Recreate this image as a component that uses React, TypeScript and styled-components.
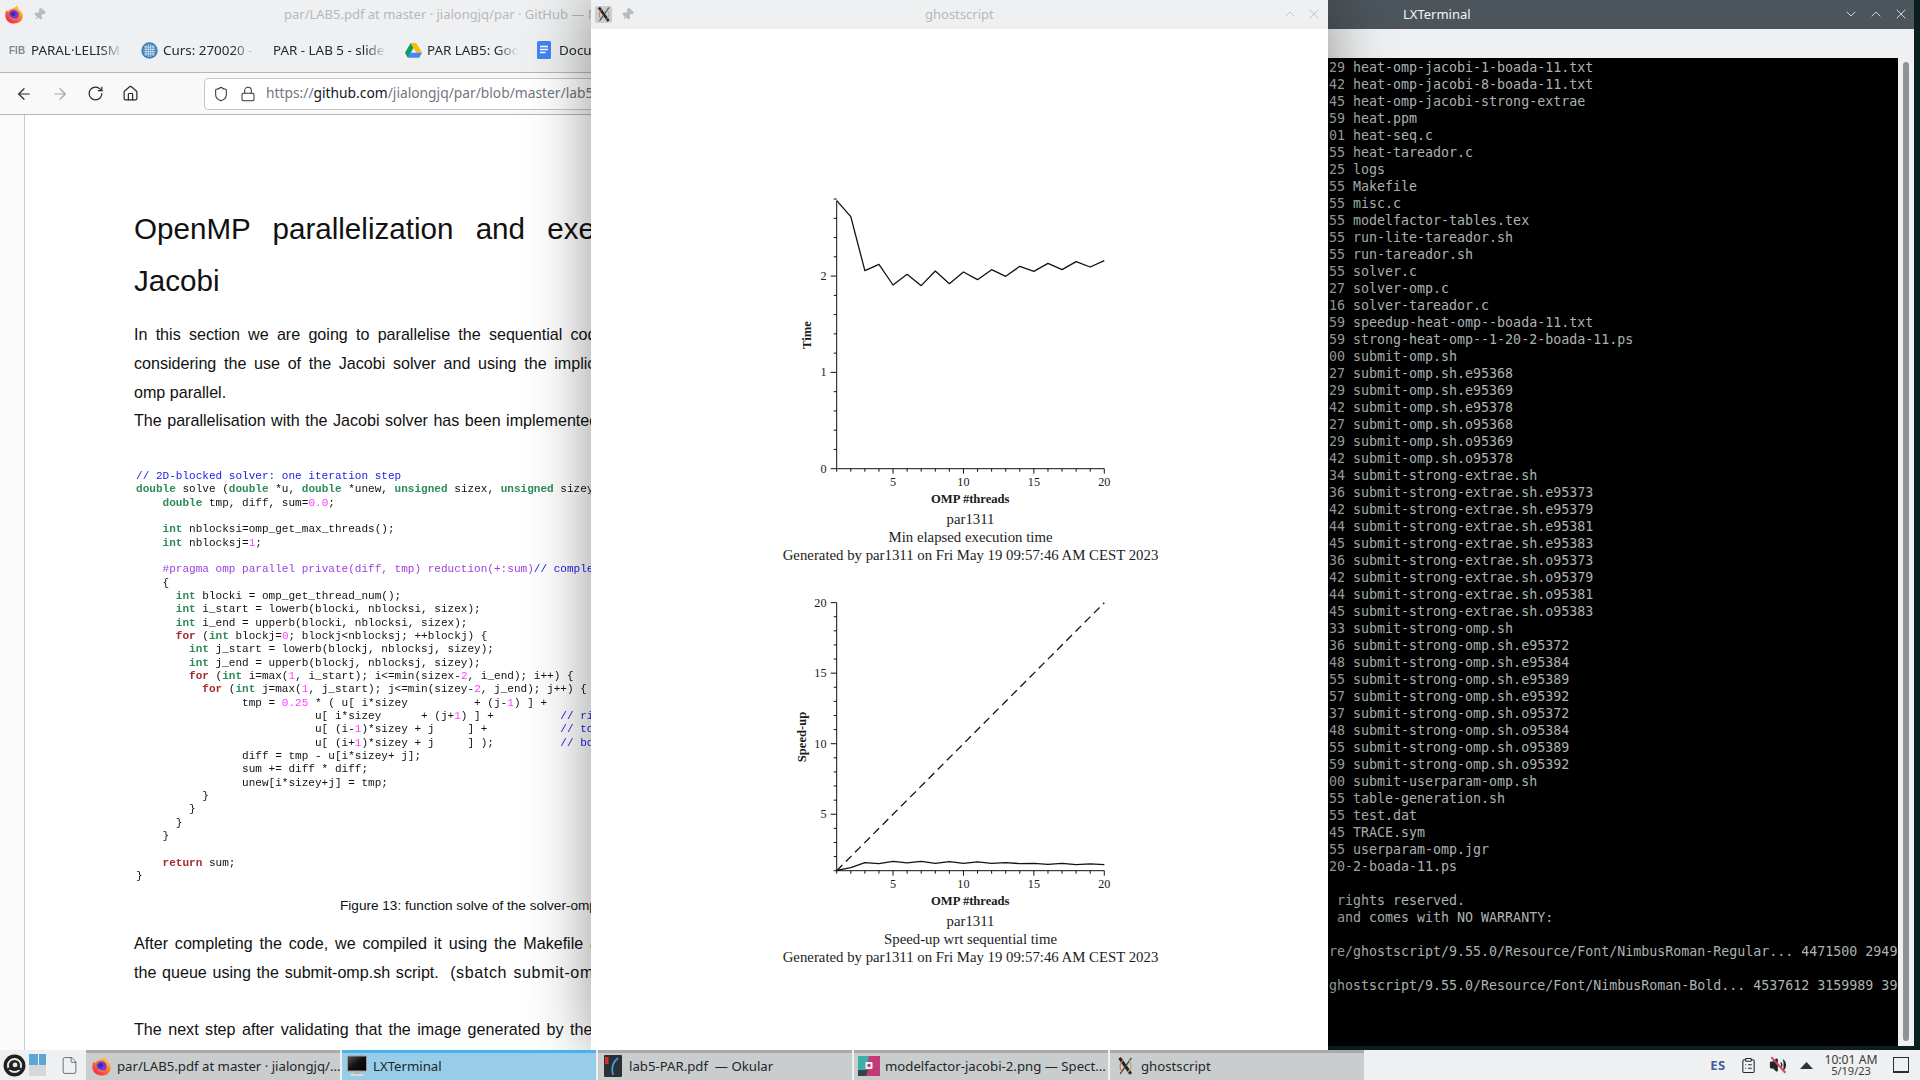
import React from "react";
import styled, { createGlobalStyle } from "styled-components";
import {
	ArrowLeft,
	ArrowRight,
	ChevronDown,
	ChevronUp,
	ClipboardList,
	File,
	Home,
	Lock,
	Pin,
	RotateCw,
	Shield,
	Volume2,
	X,
} from "lucide-react";

const GlobalStyle = createGlobalStyle`
	html, body {
		margin: 0;
		padding: 0;
		background: #0b1f1f;
		overflow: hidden;
	}
	* {
		box-sizing: border-box;
	}
`;

const UI_FONT = `"Noto Sans", "Open Sans", sans-serif`;

const Desktop = styled.div`
	width: 1920px;
	height: 1080px;
	display: flex;
	flex-direction: column;
	overflow: hidden;
	background: #0b1f1f;
	font-family: ${UI_FONT};
`;

const WindowArea = styled.div`
	position: relative;
	flex: 1;
	overflow: hidden;
`;

const Window = styled.section<{ $left: number; $width: number; $height: number; $z: number }>`
	position: absolute;
	top: 0;
	left: ${(p) => p.$left}px;
	width: ${(p) => p.$width}px;
	height: ${(p) => p.$height}px;
	z-index: ${(p) => p.$z};
	display: flex;
	flex-direction: column;
	overflow: hidden;
	background: #eff0f1;
`;

const GhostWindow = styled(Window)`
	overflow: visible;
	box-shadow: 0 0 60px rgba(0, 0, 0, 0.42);
`;

const TitleBar = styled.header<{ $dark?: boolean }>`
	position: relative;
	flex: none;
	height: 29px;
	padding-bottom: 1px;
	display: flex;
	align-items: center;
	background: ${(p) => (p.$dark ? "#4d555c" : "#eff0f1")};
	color: ${(p) => (p.$dark ? "#f4f5f5" : "#b6b9bb")};
	font-size: 13px;
`;

const TitleIcons = styled.div<{ $gap: number; $left: number }>`
	display: flex;
	align-items: center;
	gap: ${(p) => p.$gap}px;
	margin-left: ${(p) => p.$left}px;
`;

const TitleText = styled.span<{ $left: number }>`
	margin-left: ${(p) => p.$left}px;
	white-space: nowrap;
`;

const TitleButtons = styled.div<{ $gap: number; $right: number }>`
	margin-left: auto;
	margin-right: ${(p) => p.$right}px;
	display: flex;
	align-items: center;
	gap: ${(p) => p.$gap}px;
`;

/* browser */
const Bookmarks = styled.nav`
	flex: none;
	height: 44px;
	display: flex;
	align-items: center;
	gap: 8px;
	padding-left: 9px;
	padding-bottom: 1px;
	border-bottom: 1px solid #b4b6b8;
	background: #eff0f1;
	font-size: 13.4px;
	color: #26282a;
`;

const Bookmark = styled.div`
	flex: none;
	width: 124px;
	height: 22px;
	display: flex;
	align-items: center;
	gap: 4px;
	white-space: nowrap;
	overflow: hidden;
	-webkit-mask-image: linear-gradient(to right, #000 74%, transparent 92%);
	mask-image: linear-gradient(to right, #000 74%, transparent 92%);
`;

const BookmarkIcon = styled.span`
	flex: none;
	width: 18px;
	height: 18px;
	display: flex;
	align-items: center;
	justify-content: flex-start;
`;

const FibMark = styled.span`
	font-family: "Liberation Sans", sans-serif;
	font-size: 10px;
	font-weight: 700;
	color: #85898e;
`;

const NavBar = styled.div`
	flex: none;
	height: 42px;
	display: flex;
	align-items: center;
	padding-left: 15px;
	border-bottom: 1px solid #b4b6b8;
	background: #f9f9fa;
	color: #2b2b2e;
`;

const NavButtons = styled.div`
	flex: none;
	display: flex;
	align-items: center;
	gap: 18px;
	width: 189px;
`;

const UrlBox = styled.div`
	flex: none;
	width: 560px;
	height: 32px;
	display: flex;
	align-items: center;
	padding-left: 8px;
	gap: 10.5px;
	border: 1px solid #c4c5c8;
	border-radius: 4px;
	background: #fff;
`;

const UrlText = styled.span`
	position: relative;
	top: -1px;
	font-size: 13.8px;
	color: #737680;
	white-space: nowrap;
`;

const UrlHost = styled.span`
	color: #15141a;
`;

const DocArea = styled.div`
	flex: 1;
	display: flex;
	background: #fff;
	min-height: 0;
`;

const DocGutter = styled.div`
	flex: none;
	width: 25px;
	border-right: 1px solid #c9cacc;
	background: #fbfbfb;
`;

const DocPage = styled.article`
	flex: 1;
	padding: 88px 0 0 109px;
	font-family: "Liberation Sans", Arial, sans-serif;
	color: #111;
	white-space: pre;
	overflow: hidden;
`;

const DocHeading = styled.h1<{ $spacing: number }>`
	margin: 0;
	font-size: 29.6px;
	font-weight: 400;
	line-height: 52px;
	word-spacing: ${(p) => p.$spacing}px;
`;

const DocLine = styled.p<{ $spacing?: number; $height?: number; $top?: number }>`
	margin: ${(p) => p.$top ?? 0}px 0 0;
	font-size: 16.1px;
	line-height: ${(p) => p.$height ?? 29}px;
	word-spacing: ${(p) => p.$spacing ?? 0}px;
`;

const LooseRun = styled.span`
	letter-spacing: 0.6px;
`;

const CodeBlock = styled.pre`
	margin: 36px 0 0 2px;
	font-family: "Liberation Mono", "Courier New", monospace;
	font-size: 11.05px;
	line-height: 13.33px;
	color: #111;
	filter: blur(0.4px);
`;

const codeColors = {
	type: "#2e8b57",
	stmt: "#a52a2a",
	num: "#ff40ff",
	cmt: "#2020e8",
	pre: "#a040e0",
};

const CodeToken = styled.span<{ $kind: keyof typeof codeColors }>`
	color: ${(p) => codeColors[p.$kind]};
	font-weight: ${(p) => (p.$kind === "type" || p.$kind === "stmt" ? 700 : 400)};
`;

const FigureCaption = styled.p`
	margin: 13px 0 0 206px;
	font-size: 13.6px;
	line-height: 20px;
`;

/* ghostscript window */
const GhostBody = styled.div`
	flex: 1;
	display: flex;
	flex-direction: column;
	align-items: center;
	padding-top: 160px;
	background: #fff;
`;

const PlotSvg = styled.svg<{ $top: number }>`
	display: block;
	flex: none;
	margin-top: ${(p) => p.$top}px;
	font-family: "Liberation Serif", "Times New Roman", serif;
	font-size: 12.2px;
	fill: #1a1a1a;
`;

const AxisTitle = styled.text`
	font-size: 12.6px;
	font-weight: 700;
`;

const PlotCaption = styled.div`
	margin: 2px 0 0 22px;
	font-family: "Liberation Serif", "Times New Roman", serif;
	font-size: 14.8px;
	line-height: 17.9px;
	color: #1c1c1c;
	text-align: center;
	white-space: nowrap;
`;

/* terminal */
const TerminalBand = styled.div`
	flex: none;
	height: 29px;
	background: #eff0f1;
`;

const TerminalBody = styled.div`
	flex: 1;
	display: flex;
	min-height: 0;
`;

const TerminalScreen = styled.pre`
	flex: none;
	width: 570px;
	margin: 0;
	padding: 1px 0 0 1px;
	overflow: hidden;
	background: #000;
	color: #adb3b3;
	font-family: "DejaVu Sans Mono", "Liberation Mono", monospace;
	font-size: 13.3px;
	line-height: 17px;
`;

const ScrollTrack = styled.div`
	flex: 1;
	padding: 4px 0 5px 5px;
`;

const ScrollThumb = styled.div`
	width: 6px;
	height: 100%;
	border-radius: 3px;
	background: #8f9396;
`;

/* taskbar */
const Taskbar = styled.footer`
	position: relative;
	z-index: 10;
	flex: none;
	height: 30px;
	display: flex;
	align-items: center;
	background: #eff0f1;
	font-size: 13.2px;
	color: #232629;
`;

const Launchers = styled.div`
	flex: none;
	width: 86px;
	display: flex;
	align-items: center;
	padding-left: 3px;
	gap: 3px;
`;

const Pager = styled.div`
	width: 17px;
	height: 22px;
	display: grid;
	grid-template-rows: 11px 11px;
	margin: -1px 11px 0 0;
`;

const PagerDesk = styled.div<{ $on?: boolean }>`
	background: ${(p) =>
		p.$on
			? "linear-gradient(90deg, #5ba6d6 0 52%, #eff0f1 52% 56%, #5ba6d6 56%)"
			: "#d5d8d9"};
`;

const Tasks = styled.div`
	display: flex;
	gap: 2px;
`;

const Task = styled.div<{ $active?: boolean }>`
	flex: none;
	width: 254px;
	height: 30px;
	display: flex;
	align-items: center;
	gap: 5px;
	padding: 0 0 2px 4px;
	border-top: 3px solid ${(p) => (p.$active ? "#4bb1ea" : "#a9abab")};
	background: ${(p) => (p.$active ? "#98cdea" : "#c9cdce")};
	white-space: pre;
`;

const TaskIcon = styled.span`
	flex: none;
	width: 22px;
	height: 22px;
	display: flex;
	align-items: center;
	justify-content: center;
`;

const WindowBadge = styled(TaskIcon)`
	width: 17px;
	height: 17px;
	border-radius: 2px;
	background: #c7cdd0;
`;

const TiltedPin = styled(Pin)`
	transform: rotate(40deg);
`;

const Tray = styled.div`
	margin-left: auto;
	display: flex;
	align-items: center;
	padding-right: 11px;
`;

const TrayItem = styled.div<{ $width: number }>`
	width: ${(p) => p.$width}px;
	display: flex;
	align-items: center;
	justify-content: center;
	position: relative;
`;

const LangLabel = styled.span`
	font-size: 13px;
	font-weight: 700;
	color: #4a5a9c;
	letter-spacing: 0.5px;
`;

const Clock = styled.div`
	width: 64px;
	margin-right: 10px;
	text-align: center;
	line-height: 11px;
	font-size: 12.2px;
	color: #3a3a36;
`;

const ClockDate = styled.div`
	font-size: 11px;
`;

const MuteSlash = styled.span`
	position: absolute;
	left: 50%;
	top: 50%;
	width: 21px;
	height: 1.5px;
	margin: -1px 0 0 -10px;
	background: #d8455a;
	transform: rotate(48deg);
`;

const ShowDesktop = styled.div`
	width: 16px;
	height: 16px;
	border: 1px solid #2a2e32;
	border-bottom-width: 2px;
`;

/* icons */
const FirefoxIcon = ({ size }: { size: number }) => (
	<svg width={size} height={size} viewBox="0 0 24 24">
		<defs>
			<linearGradient id="ffBody" x1="0.8" y1="0.1" x2="0.2" y2="0.95">
				<stop offset="0" stopColor="#ffd23c" />
				<stop offset="0.45" stopColor="#ff7a2e" />
				<stop offset="1" stopColor="#f3264f" />
			</linearGradient>
		</defs>
		<path
			d="M16 1c1 2.500 .5 3.800 2 5.500 2.800 2.500 4.500 5 4.500 8 0 5.500-4.700 9-10.500 9C6 23.500 1.500 19 1.500 13.500c0-3 1-5.500 2-7 0 1.500.5 2.500 1.500 3C6 6 9 6 11 5c2.500-1 4.500-2 5-4z"
			fill="url(#ffBody)"
		/>
		<circle cx="12" cy="13" r="5.800" fill="#7b3ad6" />
		<circle cx="11" cy="12" r="2.800" fill="#3d2ca8" />
		<path d="M6 12c1 5 6 7 10 5-2 3.500-9 3-10-5z" fill="#ff9a2e" />
	</svg>
);

const GlobeIcon = () => (
	<svg width="17" height="17" viewBox="0 0 17 17">
		<circle cx="8.500" cy="8.500" r="8.200" fill="#3d7fb8" />
		<path
			d="M5 3v11M7.300 2v13M9.700 2v13M12 3v11M3 5h11M2.500 7.300h12M2.500 9.700h12M3 12h11"
			stroke="#cfe2f2"
			strokeWidth="0.9"
		/>
	</svg>
);

const DriveIcon = () => (
	<svg width="17" height="15" viewBox="0 0 17 15">
		<path d="M5.700 0h5.600l5.700 9.800h-5.600z" fill="#fbbc04" />
		<path d="M5.700 0L0 9.800l2.800 5 5.700-9.900z" fill="#0f9d58" />
		<path d="M2.800 14.800h11.400l2.800-5H5.600z" fill="#4285f4" />
	</svg>
);

const DocsIcon = () => (
	<svg width="14" height="18" viewBox="0 0 14 18">
		<rect width="14" height="18" rx="1.500" fill="#4285f4" />
		<path d="M3 5.500h8M3 8.500h8M3 11.500h5.500" stroke="#fff" strokeWidth="1.500" />
	</svg>
);

const XLogo = ({ size }: { size: number }) => (
	<svg width={size} height={size} viewBox="0 0 16 16">
		<path d="M3 1.500L12.500 15" stroke="#222" strokeWidth="2.600" />
		<path d="M13 1.500L3.500 15" stroke="#444" strokeWidth="1.100" />
		<path d="M5 13c-2.500-3-2-7 1-9.500" stroke="#d9752b" strokeWidth="1" fill="none" />
		<path d="M11 4c2.500 3 2.500 7-1 9.500" stroke="#c9a06a" strokeWidth="1" fill="none" />
	</svg>
);

const KdeLogo = () => (
	<svg width="23" height="23" viewBox="0 0 21 21">
		<circle cx="10.500" cy="10.500" r="10" fill="#1e2022" />
		<circle cx="10.500" cy="10.500" r="6" fill="none" stroke="#e8e8e8" strokeWidth="1.800" />
		<circle cx="11" cy="10" r="2.200" fill="#e8e8e8" />
		<path d="M4.500 13.500h12" stroke="#1e2022" strokeWidth="2" />
	</svg>
);

const TerminalIcon = () => (
	<svg width="20" height="22" viewBox="0 0 20 22">
		<defs>
			<linearGradient id="termGlass" x1="0" y1="0" x2="1" y2="1">
				<stop offset="0" stopColor="#555" />
				<stop offset="0.5" stopColor="#111" />
				<stop offset="1" stopColor="#000" />
			</linearGradient>
		</defs>
		<rect x="0.500" y="1" width="19" height="15" rx="1" fill="url(#termGlass)" stroke="#9a9a9a" />
		<rect x="7" y="16" width="6" height="3" fill="#b5b5b5" />
		<rect x="3.500" y="19" width="13" height="2" rx="1" fill="#dcdcdc" />
	</svg>
);

const OkularIcon = () => (
	<svg width="18" height="22" viewBox="0 0 18 22">
		<rect width="18" height="22" rx="1" fill="#2c2f33" />
		<rect x="1" y="2" width="3.500" height="7" fill="#d0342c" />
		<path d="M14 3c-5 4-7 10-5 17" stroke="#3d9be0" strokeWidth="1.800" fill="none" />
	</svg>
);

const SpectacleIcon = () => (
	<svg width="22" height="20" viewBox="0 0 22 20">
		<rect width="22" height="20" rx="1" fill="#3ab0a8" />
		<path d="M11 0h11v20H6z" fill="#c23a78" />
		<path d="M0 14h10l-2 6H0z" fill="#33454a" />
		<rect x="7.500" y="6" width="7" height="7" rx="1" fill="#f4f4f4" />
		<circle cx="11" cy="9.500" r="1.800" fill="#c23a78" />
	</svg>
);

/* plots */
const PLOT_X0 = 245.7;
const PLOT_DX = 14.084;
const PLOT_W = 737;
const PLOT_H = 320;
const AXIS_Y = 279.7;

const xPos = (thread: number) => PLOT_X0 + (thread - 1) * PLOT_DX;

// y positions read off the reference, in page pixels relative to each plot's top
const timeLine = [62, 110, 272, 253, 315, 283, 317, 273, 311, 276, 299, 269, 289, 259, 274, 250, 269, 245, 261, 242].map(
	(v) => 180 + v / 3 - 189,
);
const speedLine = [870, 862, 847, 850, 843, 848, 843, 849, 844, 849, 845, 849, 847, 850, 849, 852, 849, 853, 851, 853].map(
	(v) => 580 + v / 3 - 590.7,
);

type PlotProps = {
	top: number;
	axisTop: number;
	label: string;
	labelX: number;
	labelY: number;
	yTicks: { y: number; major: boolean; text?: string }[];
	points: number[];
	ideal?: boolean;
};

const Plot = ({ top, axisTop, label, labelX, labelY, yTicks, points, ideal }: PlotProps) => {
	const threads = Array.from({ length: 20 }, (_, i) => i + 1);
	return (
		<PlotSvg $top={top} width={PLOT_W} height={PLOT_H} viewBox={`0 0 ${PLOT_W} ${PLOT_H}`}>
			<g stroke="#111" strokeWidth="1" fill="none">
				<path d={`M${PLOT_X0} ${axisTop}V${AXIS_Y}H${xPos(20)}`} />
				{threads.map((t) => (
					<path key={t} d={`M${xPos(t)} ${AXIS_Y}v${t % 5 === 0 ? 5 : 3}`} />
				))}
				{yTicks.map((t) => (
					<path key={t.y} d={`M${PLOT_X0} ${t.y}h${t.major ? -6 : -3}`} />
				))}
				<polyline
					points={points.map((y, i) => `${xPos(i + 1)},${y}`).join(" ")}
					strokeWidth="1.300"
					strokeLinejoin="round"
				/>
				{ideal && (
					<path
						d={`M${PLOT_X0} ${AXIS_Y}L${xPos(20)} ${axisTop}`}
						strokeWidth="1.300"
						strokeDasharray="8 5"
					/>
				)}
			</g>
			{[5, 10, 15, 20].map((t) => (
				<text key={t} x={xPos(t)} y={AXIS_Y + 17} textAnchor="middle">
					{t}
				</text>
			))}
			{yTicks
				.filter((t) => t.text)
				.map((t) => (
					<text key={t.y} x={235.5} y={t.y + 4} textAnchor="end">
						{t.text}
					</text>
				))}
			<AxisTitle
				x={labelX}
				y={labelY}
				textAnchor="middle"
				transform={`rotate(-90 ${labelX} ${labelY})`}
			>
				{label}
			</AxisTitle>
			<AxisTitle x={379.3} y={AXIS_Y + 34} textAnchor="middle">
				OMP #threads
			</AxisTitle>
		</PlotSvg>
	);
};

const timeTicks = Array.from({ length: 15 }, (_, i) => {
	const y = AXIS_Y - i * 19.26;
	const major = i % 5 === 0;
	return { y, major, text: major ? String(i / 5) : undefined };
});

const speedTicks = Array.from({ length: 20 }, (_, i) => {
	const value = i + 1;
	const y = AXIS_Y - i * 14.11;
	const major = value % 5 === 0;
	return { y, major, text: major ? String(value) : undefined };
});

/* document code */
const codeLines = [
	"// 2D-blocked solver: one iteration step",
	"double solve (double *u, double *unew, unsigned sizex, unsigned sizey) {",
	"    double tmp, diff, sum=0.0;",
	"",
	"    int nblocksi=omp_get_max_threads();",
	"    int nblocksj=1;",
	"",
	"    #pragma omp parallel private(diff, tmp) reduction(+:sum)// complete",
	"    {",
	"      int blocki = omp_get_thread_num();",
	"      int i_start = lowerb(blocki, nblocksi, sizex);",
	"      int i_end = upperb(blocki, nblocksi, sizex);",
	"      for (int blockj=0; blockj<nblocksj; ++blockj) {",
	"        int j_start = lowerb(blockj, nblocksj, sizey);",
	"        int j_end = upperb(blockj, nblocksj, sizey);",
	"        for (int i=max(1, i_start); i<=min(sizex-2, i_end); i++) {",
	"          for (int j=max(1, j_start); j<=min(sizey-2, j_end); j++) {",
	"                tmp = 0.25 * ( u[ i*sizey          + (j-1) ] +",
	"                           u[ i*sizey      + (j+1) ] +          // right",
	"                           u[ (i-1)*sizey + j     ] +           // top",
	"                           u[ (i+1)*sizey + j     ] );          // bottom",
	"                diff = tmp - u[i*sizey+ j];",
	"                sum += diff * diff;",
	"                unew[i*sizey+j] = tmp;",
	"          }",
	"        }",
	"      }",
	"    }",
	"",
	"    return sum;",
	"}",
];

const TOKEN_RE = /(\/\/.*$|#[^/]*|\b(?:double|int|unsigned)\b|\b(?:for|return)\b|\b\d+(?:\.\d+)?\b)/;

const tokenKind = (part: string): keyof typeof codeColors => {
	if (part.startsWith("//")) return "cmt";
	if (part.startsWith("#")) return "pre";
	if (/^\d/.test(part)) return "num";
	if (part === "for" || part === "return") return "stmt";
	return "type";
};

const CodeLine = ({ text }: { text: string }) => (
	<>
		{text.split(TOKEN_RE).map((part, i) =>
			i % 2 === 1 ? (
				<CodeToken key={i} $kind={tokenKind(part)}>
					{part}
				</CodeToken>
			) : (
				part
			),
		)}
		{"\n"}
	</>
);

/* terminal text */
const terminalLines = [
	"29 heat-omp-jacobi-1-boada-11.txt",
	"42 heat-omp-jacobi-8-boada-11.txt",
	"45 heat-omp-jacobi-strong-extrae",
	"59 heat.ppm",
	"01 heat-seq.c",
	"55 heat-tareador.c",
	"25 logs",
	"55 Makefile",
	"55 misc.c",
	"55 modelfactor-tables.tex",
	"55 run-lite-tareador.sh",
	"55 run-tareador.sh",
	"55 solver.c",
	"27 solver-omp.c",
	"16 solver-tareador.c",
	"59 speedup-heat-omp--boada-11.txt",
	"59 strong-heat-omp--1-20-2-boada-11.ps",
	"00 submit-omp.sh",
	"27 submit-omp.sh.e95368",
	"29 submit-omp.sh.e95369",
	"42 submit-omp.sh.e95378",
	"27 submit-omp.sh.o95368",
	"29 submit-omp.sh.o95369",
	"42 submit-omp.sh.o95378",
	"34 submit-strong-extrae.sh",
	"36 submit-strong-extrae.sh.e95373",
	"42 submit-strong-extrae.sh.e95379",
	"44 submit-strong-extrae.sh.e95381",
	"45 submit-strong-extrae.sh.e95383",
	"36 submit-strong-extrae.sh.o95373",
	"42 submit-strong-extrae.sh.o95379",
	"44 submit-strong-extrae.sh.o95381",
	"45 submit-strong-extrae.sh.o95383",
	"33 submit-strong-omp.sh",
	"36 submit-strong-omp.sh.e95372",
	"48 submit-strong-omp.sh.e95384",
	"55 submit-strong-omp.sh.e95389",
	"57 submit-strong-omp.sh.e95392",
	"37 submit-strong-omp.sh.o95372",
	"48 submit-strong-omp.sh.o95384",
	"55 submit-strong-omp.sh.o95389",
	"59 submit-strong-omp.sh.o95392",
	"00 submit-userparam-omp.sh",
	"55 table-generation.sh",
	"55 test.dat",
	"45 TRACE.sym",
	"55 userparam-omp.jgr",
	"20-2-boada-11.ps",
	"",
	" rights reserved.",
	" and comes with NO WARRANTY:",
	"",
	"re/ghostscript/9.55.0/Resource/Font/NimbusRoman-Regular... 4471500 2949",
	"",
	"ghostscript/9.55.0/Resource/Font/NimbusRoman-Bold... 4537612 3159989 39",
];

const BrowserWindow = () => (
	<Window $left={0} $width={800} $height={1050} $z={1}>
		<TitleBar>
			<TitleIcons $gap={9} $left={4}>
				<FirefoxIcon size={20} />
				<TiltedPin size={13} color="#b9bbbd" fill="#b9bbbd" />
			</TitleIcons>
			<TitleText $left={238}>par/LAB5.pdf at master · jialongjq/par · GitHub — Mozilla Firefox</TitleText>
		</TitleBar>
		<Bookmarks>
			<Bookmark>
				<BookmarkIcon>
					<FibMark>FIB</FibMark>
				</BookmarkIcon>
				PARAL·LELISM
			</Bookmark>
			<Bookmark>
				<BookmarkIcon>
					<GlobeIcon />
				</BookmarkIcon>
				Curs: 270020 -
			</Bookmark>
			<Bookmark>PAR - LAB 5 - slide</Bookmark>
			<Bookmark>
				<BookmarkIcon>
					<DriveIcon />
				</BookmarkIcon>
				PAR LAB5: Goo
			</Bookmark>
			<Bookmark>
				<BookmarkIcon>
					<DocsIcon />
				</BookmarkIcon>
				Documents
			</Bookmark>
		</Bookmarks>
		<NavBar>
			<NavButtons>
				<ArrowLeft size={18} strokeWidth={1.6} />
				<ArrowRight size={18} strokeWidth={1.6} color="#a4a5a8" />
				<RotateCw size={17} strokeWidth={1.7} />
				<Home size={17} strokeWidth={1.7} />
			</NavButtons>
			<UrlBox>
				<Shield size={16} strokeWidth={1.6} color="#3a3a3e" />
				<Lock size={16} strokeWidth={1.6} color="#3a3a3e" />
				<UrlText>
					https://<UrlHost>github.com</UrlHost>/jialongjq/par/blob/master/lab5/LAB5.pdf
				</UrlText>
			</UrlBox>
		</NavBar>
		<DocArea>
			<DocGutter />
			<DocPage>
				<DocHeading $spacing={14}>OpenMP parallelization and execution</DocHeading>
				<DocHeading $spacing={0}>Jacobi</DocHeading>
				<DocLine $top={13} $spacing={3.75}>
					In this section we are going to parallelise the sequential code
				</DocLine>
				<DocLine $spacing={3.2}>considering the use of the Jacobi solver and using the implicit</DocLine>
				<DocLine $height={28}>omp parallel.</DocLine>
				<DocLine $height={28} $spacing={1}>
					The parallelisation with the Jacobi solver has been implemented
				</DocLine>
				<CodeBlock>
					{codeLines.map((line, i) => (
						<CodeLine key={i} text={line} />
					))}
				</CodeBlock>
				<FigureCaption>Figure 13: function solve of the solver-omp.c</FigureCaption>
				<DocLine $top={13} $spacing={2.4}>
					After completing the code, we compiled it using the Makefile and
				</DocLine>
				<DocLine $spacing={1.2}>
					the queue using the submit-omp.sh script.  <LooseRun>(sbatch submit-omp.sh)</LooseRun>
				</DocLine>
				<DocLine $top={28} $spacing={2}>
					The next step after validating that the image generated by the
				</DocLine>
			</DocPage>
		</DocArea>
	</Window>
);

const GhostscriptWindow = () => (
	<GhostWindow $left={591} $width={737} $height={1050} $z={3}>
		<TitleBar>
			<TitleIcons $gap={9} $left={4}>
				<WindowBadge>
					<XLogo size={16} />
				</WindowBadge>
				<TiltedPin size={13} color="#b9bbbd" fill="#b9bbbd" />
			</TitleIcons>
			<TitleText $left={291}>ghostscript</TitleText>
			<TitleButtons $gap={8} $right={6}>
				<ChevronUp size={16} strokeWidth={1.2} color="#b6b9bb" />
				<X size={16} strokeWidth={1.2} color="#b6b9bb" />
			</TitleButtons>
		</TitleBar>
		<GhostBody>
			<Plot
				top={0}
				axisTop={11.7}
				label="Time"
				labelX={219.5}
				labelY={146}
				yTicks={timeTicks}
				points={timeLine}
			/>
			<PlotCaption>
				par1311
				<br />
				Min elapsed execution time
				<br />
				Generated by par1311 on Fri May 19 09:57:46 AM CEST 2023
			</PlotCaption>
			<Plot
				top={26}
				axisTop={11.7}
				label="Speed-up"
				labelX={215}
				labelY={146}
				yTicks={speedTicks}
				points={speedLine}
				ideal
			/>
			<PlotCaption>
				par1311
				<br />
				Speed-up wrt sequential time
				<br />
				Generated by par1311 on Fri May 19 09:57:46 AM CEST 2023
			</PlotCaption>
		</GhostBody>
	</GhostWindow>
);

const TerminalWindow = () => (
	<Window $left={1328} $width={586} $height={1046} $z={2}>
		<TitleBar $dark>
			<TitleText $left={75}>LXTerminal</TitleText>
			<TitleButtons $gap={9} $right={5}>
				<ChevronDown size={16} strokeWidth={1.2} />
				<ChevronUp size={16} strokeWidth={1.2} />
				<X size={16} strokeWidth={1.2} />
			</TitleButtons>
		</TitleBar>
		<TerminalBand />
		<TerminalBody>
			<TerminalScreen>{terminalLines.join("\n")}</TerminalScreen>
			<ScrollTrack>
				<ScrollThumb />
			</ScrollTrack>
		</TerminalBody>
	</Window>
);

const BottomBar = () => (
	<Taskbar>
		<Launchers>
			<KdeLogo />
			<Pager>
				<PagerDesk $on />
				<PagerDesk />
			</Pager>
			<File size={19} strokeWidth={1} color="#4a4f55" />
		</Launchers>
		<Tasks>
			<Task>
				<TaskIcon>
					<FirefoxIcon size={21} />
				</TaskIcon>
				par/LAB5.pdf at master · jialongjq/...
			</Task>
			<Task $active>
				<TaskIcon>
					<TerminalIcon />
				</TaskIcon>
				LXTerminal
			</Task>
			<Task>
				<TaskIcon>
					<OkularIcon />
				</TaskIcon>
				lab5-PAR.pdf  — Okular
			</Task>
			<Task>
				<TaskIcon>
					<SpectacleIcon />
				</TaskIcon>
				modelfactor-jacobi-2.png — Spect...
			</Task>
			<Task>
				<TaskIcon>
					<XLogo size={19} />
				</TaskIcon>
				ghostscript
			</Task>
		</Tasks>
		<Tray>
			<TrayItem $width={30}>
				<LangLabel>ES</LangLabel>
			</TrayItem>
			<TrayItem $width={30}>
				<ClipboardList size={17} strokeWidth={1.5} color="#232629" />
			</TrayItem>
			<TrayItem $width={30}>
				<Volume2 size={18} strokeWidth={1.6} color="#232629" fill="#232629" />
				<MuteSlash />
			</TrayItem>
			<TrayItem $width={26}>
				<svg width="13" height="7" viewBox="0 0 13 7">
					<path d="M6.500 0L13 7H0z" fill="#2e3236" />
				</svg>
			</TrayItem>
			<Clock>
				10:01 AM
				<ClockDate>5/19/23</ClockDate>
			</Clock>
			<ShowDesktop />
		</Tray>
	</Taskbar>
);

const App = () => (
	<Desktop>
		<GlobalStyle />
		<WindowArea>
			<BrowserWindow />
			<GhostscriptWindow />
			<TerminalWindow />
		</WindowArea>
		<BottomBar />
	</Desktop>
);

export default App;
